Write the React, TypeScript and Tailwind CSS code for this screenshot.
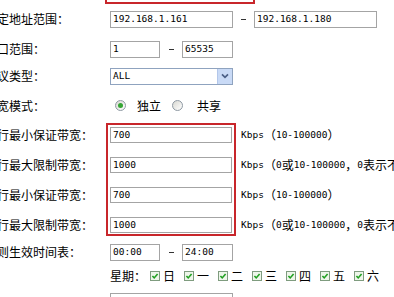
import React from 'react';

// half-width runs in a small mono face, CJK runs at 12px (like SimSun in the original)
const Mix = ({ text }: { text: string }) => (
  <>
    {text
      .split(/([\x20-\x7e]+)/)
      .filter(Boolean)
      .map((part, i) =>
        /^[\x20-\x7e]+$/.test(part) ? (
          <span key={i} className="font-['DejaVu_Sans_Mono',monospace] text-[9.5px]">
            {part}
          </span>
        ) : (
          <span key={i}>{part}</span>
        )
      )}
  </>
);

const Field = ({ value, w, h = 'h-[17px]' }: { value: string; w: string; h?: string }) => (
  <div
    className={`${w} ${h} shrink-0 border border-[#a4a4a4] bg-white flex items-center pl-[2px] font-['DejaVu_Sans_Mono',monospace] text-[9.5px] text-black whitespace-nowrap`}
  >
    {value}
  </div>
);

const Dash = ({ w }: { w: string }) => (
  <div className={`${w} shrink-0 flex items-center justify-center`}>
    <span className="w-[5px] h-[1px] bg-[#333]"></span>
  </div>
);

const Radio = ({ on }: { on?: boolean }) => (
  <span className="w-[11px] h-[11px] shrink-0 rounded-full border border-[#8e99a3] bg-linear-to-br from-[#d8d8d2] to-white flex items-center justify-center">
    {on && <span className="w-[5px] h-[5px] rounded-full bg-[#35a535]"></span>}
  </span>
);

const Check = () => (
  <span className="w-[10px] h-[10px] shrink-0 border border-[#7f9c7f] bg-[#eef6ea] flex items-center justify-center">
    <svg width="8" height="8" viewBox="0 0 8 8">
      <path d="M1.4 4 L3.2 5.9 L6.6 1.9" stroke="#22a022" strokeWidth="1.6" fill="none" />
    </svg>
  </span>
);

const Label = ({ text, w = 'w-[113px]' }: { text: string; w?: string }) => (
  <div className={`${w} shrink-0 whitespace-nowrap`}>{text}</div>
);

const days = ['日', '一', '二', '三', '四', '五', '六'];

export default function App() {
  return (
    <div className="w-[394px] h-[297px] overflow-hidden bg-white text-black text-[12px] leading-none font-['Noto_Sans_CJK_SC',sans-serif]">
      <div className="-ml-[3px] -mt-[20px]">
        {/* cut-off highlighted field at the top */}
        <div className="flex h-[24px]">
          <div className="w-[108px] shrink-0"></div>
          <div className="w-[150px] h-full shrink-0 border-2 border-[#c8262b]"></div>
          <div className="ml-[2px] self-end pb-[4px] text-[#d23a3a] whitespace-nowrap">
            <Mix text="（1-100000）" />
          </div>
        </div>

        {/* address range */}
        <div className="flex items-center h-[30px]">
          <Label text="定地址范围：" />
          <Field value="192.168.1.161" w="w-[123px]" />
          <Dash w="w-[21px]" />
          <Field value="192.168.1.180" w="w-[123px]" />
        </div>

        {/* port range */}
        <div className="flex items-center h-[30px]">
          <Label text="口范围：" />
          <Field value="1" w="w-[50px]" />
          <Dash w="w-[22px]" />
          <Field value="65535" w="w-[51px]" />
        </div>

        {/* protocol */}
        <div className="flex items-center h-[24px]">
          <Label text="议类型：" />
          <div className="w-[123px] h-[17px] shrink-0 border border-[#8fa3bf] bg-white flex items-center pl-[2px] font-['DejaVu_Sans_Mono',monospace] text-[9.5px]">
            <span className="flex-1">ALL</span>
            <span className="w-[15px] h-[15px] bg-[#c9daf6] border-l border-[#b3c7ea] flex items-center justify-center">
              <svg width="8" height="6" viewBox="0 0 8 6">
                <path d="M1 1.3 L4 4.3 L7 1.3" stroke="#4b5f86" strokeWidth="1.7" fill="none" />
              </svg>
            </span>
          </div>
        </div>

        {/* bandwidth mode */}
        <div className="flex items-center h-[35px]">
          <Label text="宽模式：" />
          <div className="flex items-center pl-[5px]">
            <Radio on />
            <span className="ml-[11px]">独立</span>
            <span className="ml-[11px]">
              <Radio />
            </span>
            <span className="ml-[14px]">共享</span>
          </div>
        </div>

        {/* bandwidth limits, highlighted */}
        <div className="flex">
          <div className="w-[109px] shrink-0 flex flex-col gap-[14px] pt-[4px]">
            {['行最小保证带宽：', '行最大限制带宽：', '行最小保证带宽：', '行最大限制带宽：'].map((t, i) => (
              <div key={i} className="h-[16px] flex items-center whitespace-nowrap">
                {t}
              </div>
            ))}
          </div>
          <div className="shrink-0 border-2 border-[#c8262b] px-[2px] pt-[2px] pb-[1px] flex flex-col gap-[14px]">
            <Field value="700" w="w-[122px]" h="h-[16px]" />
            <Field value="1000" w="w-[122px]" h="h-[16px]" />
            <Field value="700" w="w-[122px]" h="h-[16px]" />
            <Field value="1000" w="w-[122px]" h="h-[16px]" />
          </div>
          <div className="ml-[5px] flex flex-col gap-[14px] pt-[4px] whitespace-nowrap">
            {[
              'Kbps（10-100000）',
              'Kbps（0或10-100000，0表示不限制）',
              'Kbps（10-100000）',
              'Kbps（0或10-100000，0表示不限制）',
            ].map((t, i) => (
              <div key={i} className="h-[16px] flex items-center">
                <Mix text={t} />
              </div>
            ))}
          </div>
        </div>

        {/* schedule */}
        <div className="flex items-center h-[32px]">
          <Label text="则生效时间表：" />
          <Field value="00:00" w="w-[50px]" />
          <Dash w="w-[22px]" />
          <Field value="24:00" w="w-[51px]" />
        </div>

        {/* weekdays */}
        <div className="flex items-center h-[16px]">
          <Label text="" />
          <span className="w-[40px] shrink-0">星期：</span>
          <div className="flex items-center gap-[9px]">
            {days.map((d) => (
              <span key={d} className="flex items-center gap-[3px]">
                <Check />
                <span>{d}</span>
              </span>
            ))}
          </div>
        </div>

        {/* next row, cut off at the bottom */}
        <div className="flex items-start h-[30px] pt-[9px]">
          <Label text="" />
          <Field value="" w="w-[123px]" />
        </div>
      </div>
    </div>
  );
}
